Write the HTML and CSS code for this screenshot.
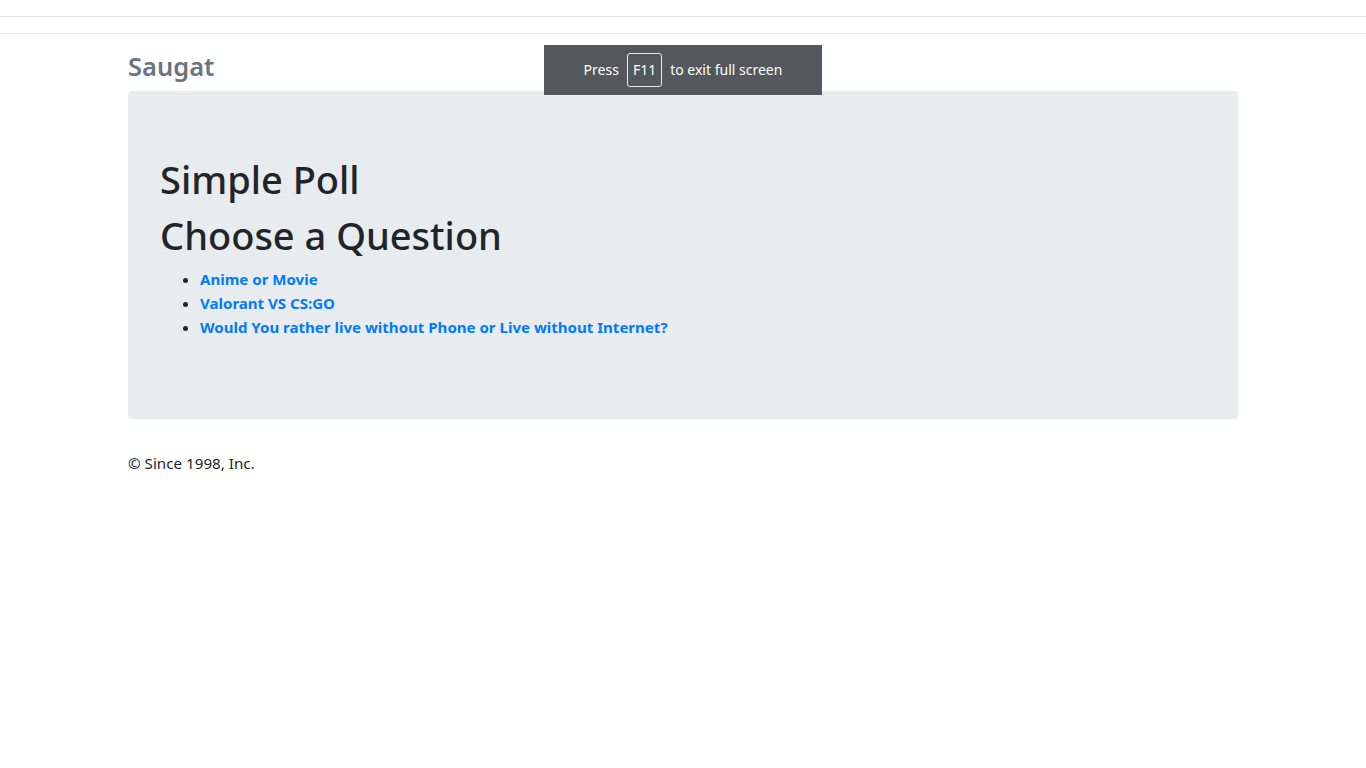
FILE: index.html
```html
<!DOCTYPE html>
<html lang="en">
<head>
<meta charset="utf-8">
<title>Simple Poll</title>
<link rel="stylesheet" href="styles.css">
</head>
<body>
<div class="topbar"></div>
<div class="subbar"></div>
<main class="container">
  <h3 class="brand">Saugat</h3>
  <section class="jumbotron">
    <h1 class="title">Simple Poll</h1>
    <h1 class="title">Choose a Question</h1>
    <ul class="questions">
      <li><a href="#">Anime or Movie</a></li>
      <li><a href="#">Valorant VS CS:GO</a></li>
      <li><a href="#">Would You rather live without Phone or Live without Internet?</a></li>
    </ul>
  </section>
  <footer class="footer">© Since 1998, Inc.</footer>
</main>
<div class="fs-toast">Press <span class="key">F11</span> to exit full screen</div>
</body>
</html>
```
FILE: styles.css
```css
* { box-sizing: border-box; }
html, body { margin: 0; padding: 0; }
body {
  font-family: "Noto Sans", "Open Sans", sans-serif;
  font-size: 15.2px;
  line-height: 24px;
  color: #212529;
  background: #fff;
}
.topbar { height: 17px; border-bottom: 1px solid #dee2e6; }
.subbar { height: 17px; border-bottom: 1px solid #dee2e6; }
.container {
  width: 1110px;
  margin: 0 auto;
  padding-top: 15px;
}
.brand {
  margin: 0 0 8px;
  font-size: 25.5px;
  font-weight: 600;
  line-height: 34px;
  color: #6c757d;
}
.jumbotron {
  background: #e9ecef;
  border-radius: 4px;
  padding: 64px 32px;
  margin-bottom: 32px;
}
.title {
  margin: 0 0 8px;
  font-size: 38px;
  font-weight: 500;
  line-height: 48px;
}
.questions {
  margin: 0 0 16px;
  padding-left: 40px;
}
.questions li { font-size: 15.05px; }
.questions a {
  color: #007bff;
  font-weight: 700;
  text-decoration: none;
}
.footer { margin: 0; }
.fs-toast {
  position: absolute;
  top: 45px;
  left: 544px;
  width: 278px;
  height: 50px;
  background: #54575b;
  color: #fff;
  font-size: 14px;
  display: flex;
  align-items: center;
  justify-content: center;
  gap: 8px;
}
.key {
  border: 1px solid #e8e8e8;
  border-radius: 3px;
  padding: 6px 5px;
  line-height: 20px;
}
```
